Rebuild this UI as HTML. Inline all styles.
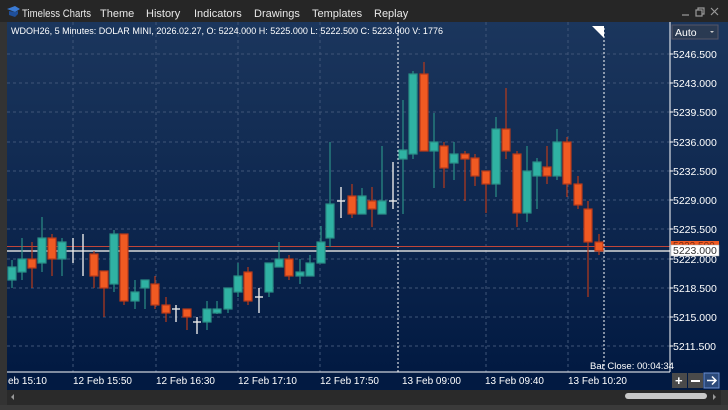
<!DOCTYPE html>
<html><head><meta charset="utf-8"><style>
body{margin:0;width:728px;height:410px;overflow:hidden;background:#2b2b2b;font-family:"Liberation Sans",sans-serif}
svg{display:block}
text{font-family:"Liberation Sans",sans-serif}
</style></head><body>
<svg width="728" height="410" viewBox="0 0 728 410" xmlns="http://www.w3.org/2000/svg">
<defs>
<linearGradient id="bg" x1="0" y1="0" x2="0" y2="1">
<stop offset="0" stop-color="#1b365d"/><stop offset="1" stop-color="#021a42"/>
</linearGradient>
</defs>
<rect width="728" height="410" fill="#2d2d2d"/>
<rect x="0" y="0" width="728" height="24" fill="#262626"/>
<path d="M7 9 L15 6 L20 9 L15 12 Z" fill="#3a7bd5"/><path d="M9 11 L9 15 L15 17 L18 14 L18 11 L15 12 Z" fill="#1f4f9a"/>
<g fill="#e8e8e8" font-size="11">
<text x="22" y="17" textLength="69" lengthAdjust="spacingAndGlyphs">Timeless Charts</text>
<text x="100" y="17">Theme</text>
<text x="146" y="17">History</text>
<text x="194" y="17">Indicators</text>
<text x="254" y="17">Drawings</text>
<text x="312" y="17">Templates</text>
<text x="374" y="17">Replay</text>
</g>
<g stroke="#9a9a9a" fill="none" stroke-width="1.2">
<line x1="682" y1="15" x2="689" y2="15"/>
<rect x="696" y="10" width="6" height="6"/><path d="M698 10 V8 H704 V14 H702"/>
<path d="M711 8 L718 15 M718 8 L711 15"/>
</g>
<rect x="7" y="22" width="663" height="350" fill="url(#bg)"/>
<rect x="670" y="22" width="58" height="350" fill="url(#bg)"/>
<g stroke="#3f5578" stroke-dasharray="3,3" stroke-width="1">
<line x1="7" x2="670" y1="54" y2="54"/><line x1="7" x2="670" y1="83" y2="83"/><line x1="7" x2="670" y1="112" y2="112"/><line x1="7" x2="670" y1="142" y2="142"/><line x1="7" x2="670" y1="171" y2="171"/><line x1="7" x2="670" y1="200" y2="200"/><line x1="7" x2="670" y1="229" y2="229"/><line x1="7" x2="670" y1="259" y2="259"/><line x1="7" x2="670" y1="288" y2="288"/><line x1="7" x2="670" y1="317" y2="317"/><line x1="7" x2="670" y1="346" y2="346"/>
<line x1="73" x2="73" y1="22" y2="372"/><line x1="156" x2="156" y1="22" y2="372"/><line x1="238" x2="238" y1="22" y2="372"/><line x1="320" x2="320" y1="22" y2="372"/><line x1="486" x2="486" y1="22" y2="372"/><line x1="568" x2="568" y1="22" y2="372"/>
</g>
<g stroke="#ffffff" stroke-dasharray="2,2" stroke-width="1">
<line x1="398" x2="398" y1="22" y2="372"/><line x1="604" x2="604" y1="28" y2="372"/>
</g>
<path d="M592 26 L604 26 L604 38 Z" fill="#fff"/>
<line x1="7" x2="670" y1="246.5" y2="246.5" stroke="#c0463a" stroke-width="1"/>
<line x1="7" x2="670" y1="251" y2="251" stroke="#d8d8d8" stroke-width="1.5"/>
<g stroke-width="1.2">
<g stroke="#2a8f86" fill="#2fb2a3">
<line x1="12" x2="12" y1="260" y2="288"/><rect x="8" y="267" width="8" height="13"/>
<line x1="22" x2="22" y1="238" y2="280"/><rect x="18" y="259" width="8" height="13"/>
<line x1="42" x2="42" y1="217" y2="272"/><rect x="38" y="238" width="8" height="25"/>
<line x1="62" x2="62" y1="238" y2="276"/><rect x="58" y="242" width="8" height="17"/>
<line x1="114" x2="114" y1="230" y2="292"/><rect x="110" y="234" width="8" height="50"/>
<line x1="135" x2="135" y1="280" y2="309"/><rect x="131" y="292" width="8" height="9"/>
<line x1="145" x2="145" y1="280" y2="309"/><rect x="141" y="280" width="8" height="8"/>
<line x1="207" x2="207" y1="301" y2="330"/><rect x="203" y="309" width="8" height="13"/>
<line x1="217" x2="217" y1="301" y2="314"/><rect x="213" y="309" width="8" height="4"/>
<line x1="228" x2="228" y1="288" y2="313"/><rect x="224" y="288" width="8" height="21"/>
<line x1="238" x2="238" y1="263" y2="297"/><rect x="234" y="276" width="8" height="16"/>
<line x1="269" x2="269" y1="263" y2="297"/><rect x="265" y="263" width="8" height="29"/>
<line x1="279" x2="279" y1="242" y2="267"/><rect x="275" y="259" width="8" height="8"/>
<line x1="300" x2="300" y1="259" y2="284"/><rect x="296" y="272" width="8" height="4"/>
<line x1="310" x2="310" y1="255" y2="276"/><rect x="306" y="263" width="8" height="13"/>
<line x1="321" x2="321" y1="226" y2="263"/><rect x="317" y="242" width="8" height="21"/>
<line x1="330" x2="330" y1="142" y2="247"/><rect x="326" y="204" width="8" height="34"/>
<line x1="362" x2="362" y1="188" y2="214"/><rect x="358" y="196" width="8" height="18"/>
<line x1="382" x2="382" y1="146" y2="214"/><rect x="378" y="201" width="8" height="13"/>
<line x1="403" x2="403" y1="100" y2="214"/><rect x="399" y="150" width="8" height="9"/>
<line x1="413" x2="413" y1="71" y2="159"/><rect x="409" y="74" width="8" height="80"/>
<line x1="434" x2="434" y1="113" y2="188"/><rect x="430" y="142" width="8" height="9"/>
<line x1="454" x2="454" y1="142" y2="180"/><rect x="450" y="154" width="8" height="9"/>
<line x1="496" x2="496" y1="117" y2="197"/><rect x="492" y="129" width="8" height="55"/>
<line x1="527" x2="527" y1="146" y2="222"/><rect x="523" y="171" width="8" height="42"/>
<line x1="537" x2="537" y1="158" y2="209"/><rect x="533" y="162" width="8" height="14"/>
<line x1="557" x2="557" y1="129" y2="180"/><rect x="553" y="142" width="8" height="34"/>
</g>
<g stroke="#b83a1a" fill="#f05a22">
<line x1="32" x2="32" y1="242" y2="288"/><rect x="28" y="259" width="8" height="9"/>
<line x1="52" x2="52" y1="234" y2="276"/><rect x="48" y="238" width="8" height="21"/>
<line x1="94" x2="94" y1="251" y2="288"/><rect x="90" y="254" width="8" height="22"/>
<line x1="104" x2="104" y1="271" y2="317"/><rect x="100" y="271" width="8" height="17"/>
<line x1="124" x2="124" y1="234" y2="305"/><rect x="120" y="234" width="8" height="67"/>
<line x1="155" x2="155" y1="276" y2="309"/><rect x="151" y="284" width="8" height="21"/>
<line x1="166" x2="166" y1="297" y2="322"/><rect x="162" y="305" width="8" height="8"/>
<line x1="187" x2="187" y1="309" y2="330"/><rect x="183" y="309" width="8" height="8"/>
<line x1="248" x2="248" y1="267" y2="305"/><rect x="244" y="272" width="8" height="29"/>
<line x1="289" x2="289" y1="255" y2="280"/><rect x="285" y="259" width="8" height="17"/>
<line x1="352" x2="352" y1="184" y2="218"/><rect x="348" y="196" width="8" height="18"/>
<line x1="372" x2="372" y1="187" y2="227"/><rect x="368" y="201" width="8" height="8"/>
<line x1="424" x2="424" y1="62" y2="151"/><rect x="420" y="74" width="8" height="77"/>
<line x1="444" x2="444" y1="142" y2="188"/><rect x="440" y="146" width="8" height="22"/>
<line x1="465" x2="465" y1="151" y2="201"/><rect x="461" y="154" width="8" height="5"/>
<line x1="475" x2="475" y1="154" y2="186"/><rect x="471" y="158" width="8" height="18"/>
<line x1="486" x2="486" y1="171" y2="213"/><rect x="482" y="171" width="8" height="13"/>
<line x1="506" x2="506" y1="88" y2="159"/><rect x="502" y="129" width="8" height="22"/>
<line x1="517" x2="517" y1="151" y2="227"/><rect x="513" y="154" width="8" height="59"/>
<line x1="547" x2="547" y1="146" y2="184"/><rect x="543" y="167" width="8" height="9"/>
<line x1="567" x2="567" y1="137" y2="197"/><rect x="563" y="142" width="8" height="42"/>
<line x1="578" x2="578" y1="176" y2="209"/><rect x="574" y="184" width="8" height="21"/>
<line x1="588" x2="588" y1="201" y2="297"/><rect x="584" y="209" width="8" height="33"/>
<line x1="599" x2="599" y1="234" y2="255"/><rect x="595" y="242" width="8" height="9"/>
</g>
<g stroke="#e8e8e8" stroke-width="1.4">
<line x1="73" x2="73" y1="238" y2="263"/>
<line x1="83" x2="83" y1="234" y2="276"/>
<line x1="176" x2="176" y1="305" y2="322"/><line x1="172" x2="180" y1="309" y2="309"/>
<line x1="197" x2="197" y1="317" y2="334"/><line x1="193" x2="201" y1="322" y2="322"/>
<line x1="259" x2="259" y1="288" y2="313"/><line x1="255" x2="263" y1="297" y2="297"/>
<line x1="341" x2="341" y1="187" y2="218"/><line x1="337" x2="345" y1="201" y2="201"/>
<line x1="393" x2="393" y1="162" y2="209"/><line x1="389" x2="397" y1="201" y2="201"/>
</g>
</g>
<text x="11" y="34" fill="#ffffff" font-size="9" textLength="432" lengthAdjust="spacingAndGlyphs">WDOH26, 5 Minutes: DOLAR MINI, 2026.02.27, O: 5224.000 H: 5225.000 L: 5222.500 C: 5223.000 V: 1776</text>
<line x1="670" x2="670" y1="22" y2="372" stroke="#ffffff"/>
<rect x="672" y="25" width="46" height="14" fill="#2a3a52" stroke="#556" stroke-width="1"/>
<text x="675" y="36" fill="#fff" font-size="10.5">Auto</text>
<path d="M710 31 L714 31 L712 33 Z" fill="#ccc"/>
<g fill="#fff" font-size="10.5">
<text x="673" y="58">5246.500</text><text x="673" y="87">5243.000</text><text x="673" y="116">5239.500</text><text x="673" y="146">5236.000</text><text x="673" y="175">5232.500</text><text x="673" y="204">5229.000</text><text x="673" y="233">5225.500</text><text x="673" y="263">5222.000</text><text x="673" y="292">5218.500</text><text x="673" y="321">5215.000</text><text x="673" y="350">5211.500</text>
</g>
<g stroke="#fff"><line x1="670" x2="673" y1="54" y2="54"/><line x1="670" x2="673" y1="83" y2="83"/><line x1="670" x2="673" y1="112" y2="112"/><line x1="670" x2="673" y1="142" y2="142"/><line x1="670" x2="673" y1="171" y2="171"/><line x1="670" x2="673" y1="200" y2="200"/><line x1="670" x2="673" y1="229" y2="229"/><line x1="670" x2="673" y1="259" y2="259"/><line x1="670" x2="673" y1="288" y2="288"/><line x1="670" x2="673" y1="317" y2="317"/><line x1="670" x2="673" y1="346" y2="346"/></g>
<rect x="671" y="241" width="48" height="9" fill="#f05a22"/>
<text x="673" y="249" fill="#7a2a10" font-size="10">5223.500</text>
<rect x="671" y="245" width="48" height="11" fill="#fff" stroke="#aaa" stroke-width="0.5"/>
<text x="673" y="254" fill="#333" font-size="10.5">5223.000</text>
<text x="590" y="369" fill="#fff" font-size="9.5">Bar Close: 00:04:34</text>
<rect x="7" y="372" width="663" height="18" fill="#021a42"/>
<line x1="7" x2="670" y1="372" y2="372" stroke="#fff"/>
<g fill="#fff" font-size="10">
<text x="8" y="384">eb 15:10</text><text x="73" y="384">12 Feb 15:50</text><text x="156" y="384">12 Feb 16:30</text><text x="238" y="384">12 Feb 17:10</text><text x="320" y="384">12 Feb 17:50</text><text x="402" y="384">13 Feb 09:00</text><text x="485" y="384">13 Feb 09:40</text><text x="568" y="384">13 Feb 10:20</text>
</g>
<rect x="670" y="372" width="58" height="18" fill="#021a42"/>
<rect x="672" y="373" width="15" height="15" fill="#4a4a4a"/><text x="675" y="385" fill="#fff" font-size="13" font-weight="bold">+</text>
<rect x="688" y="373" width="15" height="15" fill="#4a4a4a"/><rect x="691" y="380" width="9" height="2" fill="#fff"/>
<rect x="704" y="373" width="15" height="15" fill="#2c4a7a" stroke="#6a8fd0"/><path d="M707 380.5 H716 M712 376.5 L716 380.5 L712 384.5" stroke="#fff" stroke-width="1.5" fill="none"/>
<rect x="7" y="390" width="714" height="15" fill="#2a2a2a"/>
<path d="M14 394 L14 400 L11 397 Z" fill="#999"/>
<rect x="625" y="393" width="82" height="6" rx="3" fill="#c8c8c8"/>
<path d="M713 394 L713 400 L716 397 Z" fill="#999"/>
<rect x="0" y="405" width="728" height="5" fill="#3a3a3a"/>
<rect x="0" y="22" width="7" height="383" fill="#333"/>
<rect x="721" y="390" width="7" height="15" fill="#333"/>
</svg>
</body></html>
